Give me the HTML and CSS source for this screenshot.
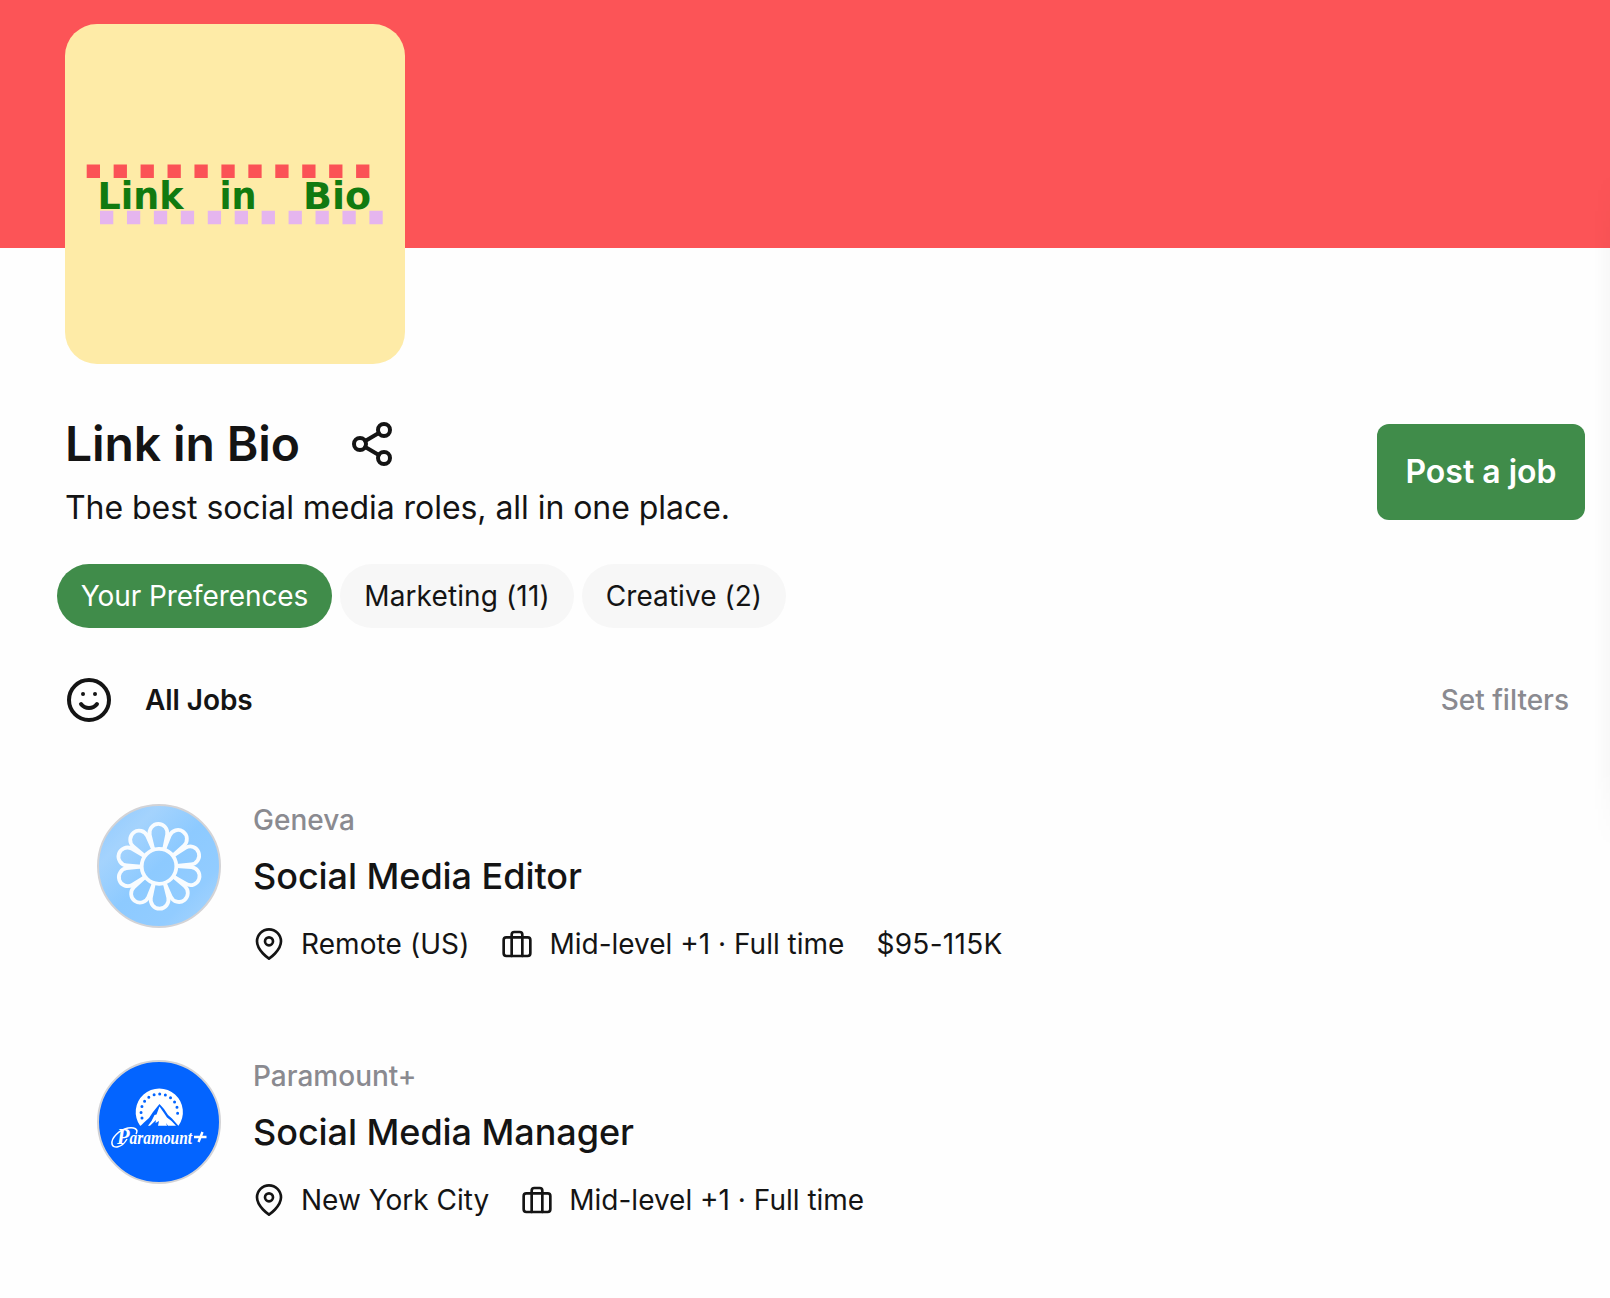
FILE: index.html
```html
<!DOCTYPE html>
<html lang="en">
<head>
<meta charset="utf-8">
<title>Link in Bio</title>
<link rel="stylesheet" href="styles.css">
</head>
<body>
<svg class="sprite" width="0" height="0">
  <symbol id="pin" viewBox="0 0 24 24"><path d="M21 10c0 7-9 13-9 13s-9-6-9-13a9 9 0 0 1 18 0z"/><circle cx="12" cy="10" r="3"/></symbol>
  <symbol id="case" viewBox="0 0 24 24"><rect x="2" y="7" width="20" height="14" rx="2"/><path d="M16 21V5a2 2 0 0 0-2-2h-4a2 2 0 0 0-2 2v16"/></symbol>
</svg>
<header class="banner">
  <div class="logo">
    <svg width="340" height="340" viewBox="0 0 340 340">
      <path class="dots-top" d="M21.7 147.300H310"/>
      <path class="dots-bottom" d="M35 193.500H319"/>
      <g class="wordmark">
        <text x="32.500" y="184.500" textLength="86" lengthAdjust="spacingAndGlyphs">Link</text>
        <text x="154.500" y="184.500" textLength="37" lengthAdjust="spacingAndGlyphs">in</text>
        <text x="238" y="184.500" textLength="68" lengthAdjust="spacingAndGlyphs">Bio</text>
      </g>
    </svg>
  </div>
</header>
<main class="page">
  <section class="intro">
    <div>
      <div class="title-row">
        <h1>Link in Bio</h1>
        <svg class="icon icon-lg" viewBox="0 0 24 24"><circle cx="18" cy="5" r="3"/><circle cx="6" cy="12" r="3"/><circle cx="18" cy="19" r="3"/><path d="M8.590 13.510l6.830 3.980M15.410 6.510l-6.820 3.980"/></svg>
      </div>
      <p class="tagline">The best social media roles, all in one place.</p>
    </div>
    <button class="post">Post a job</button>
  </section>
  <nav class="pills">
    <a class="pill pill-active">Your Preferences</a>
    <a class="pill pill-marketing">Marketing (11)</a>
    <a class="pill pill-creative">Creative (2)</a>
  </nav>
  <div class="list-head">
    <svg class="icon icon-lg" viewBox="0 0 24 24"><circle cx="12" cy="12" r="10"/><path d="M8 14s1.500 2 4 2 4-2 4-2M9 9h.01M15 9h.01"/></svg>
    <h2>All Jobs</h2>
    <a class="filters">Set filters</a>
  </div>
  <section class="jobs">
    <article class="job">
      <svg class="avatar" viewBox="0 0 124 124">
        <defs>
          <linearGradient id="sky" x1="0" y1="0" x2="1" y2="1"><stop offset="0" stop-color="#8fc9ff"/><stop offset=".25" stop-color="#a4d3fd"/><stop offset=".5" stop-color="#8dcaff"/><stop offset=".75" stop-color="#92ccff"/><stop offset="1" stop-color="#acd6fc"/></linearGradient>
          <path id="petal" d="M-5.500-17L-8.800-31.500A9 9 0 1 1 8.800-31.500L5.500-17"/>
        </defs>
        <circle cx="62" cy="62" r="61" fill="url(#sky)" stroke="#d3d3d6" stroke-width="2"/>
        <g class="flower" transform="translate(62 62.300) rotate(-1) scale(.99 1)">
          <circle r="17.500"/>
          <use href="#petal"/><use href="#petal" transform="rotate(36)"/><use href="#petal" transform="rotate(72)"/><use href="#petal" transform="rotate(108)"/><use href="#petal" transform="rotate(144)"/><use href="#petal" transform="rotate(180)"/><use href="#petal" transform="rotate(216)"/><use href="#petal" transform="rotate(252)"/><use href="#petal" transform="rotate(288)"/><use href="#petal" transform="rotate(324)"/>
        </g>
      </svg>
      <div class="details">
        <div class="company">Geneva</div>
        <h3>Social Media Editor</h3>
        <div class="meta">
          <span class="fact"><svg class="icon"><use href="#pin"/></svg><span class="place">Remote (US)</span></span>
          <span class="fact"><svg class="icon"><use href="#case"/></svg><span>Mid-level +1 · Full time</span></span>
          <span class="salary">$95-115K</span>
        </div>
      </div>
    </article>
    <article class="job">
      <svg class="avatar" viewBox="0 0 124 124">
        <circle cx="62" cy="62" r="61" fill="#0364ff" stroke="#d3d3d6" stroke-width="2"/>
        <path fill="#fff" d="M43.100 65.700A23.600 23.600 0 1 1 81.500 65.700z"/>
        <path class="stars" d="M45 58A18.300 18.300 0 1 1 79.700 58"/>
        <path fill="#0364ff" d="M43 66.500L47 62.500L52 58L56 52L62.500 44L67 49L71 55L75 58.500L82 66.500z"/>
        <path fill="#fff" d="M62.500 46.500L67 53L70 57.500L74.500 61L79 65.800H71L69 63L70 65.800H61L62 61L58.500 63L59 60L53 65.800H51L54.500 61L57.500 55L59.500 54.500z"/>
        <text class="script" x="20" y="83.800" textLength="75" lengthAdjust="spacingAndGlyphs"><tspan class="script-cap">P</tspan>aramount</text>
        <path class="plus" d="M105.500 72L101.500 82M97 77H109.500"/>
        <path class="swash" d="M30 79C25 88 16 89 15 84C14 78 22 70 31 68C37 67 42 69 39 74"/>
      </svg>
      <div class="details">
        <div class="company">Paramount+</div>
        <h3>Social Media Manager</h3>
        <div class="meta">
          <span class="fact"><svg class="icon"><use href="#pin"/></svg><span>New York City</span></span>
          <span class="fact"><svg class="icon"><use href="#case"/></svg><span>Mid-level +1 · Full time</span></span>
        </div>
      </div>
    </article>
  </section>
</main>
<div class="edge-shadow"></div>
</body>
</html>
```
FILE: styles.css
```css
* { box-sizing: border-box; }
body {
  margin: 0;
  width: 1610px;
  height: 1298px;
  overflow: hidden;
  position: relative;
  background: #fefefe;
  color: #141414;
  font-family: Inter, "Liberation Sans", sans-serif;
  font-size: 28px;
  line-height: 32px;
  white-space: nowrap;
}
h1, h2, h3, p { margin: 0; }
.sprite { position: absolute; }
.banner { height: 248px; padding: 24px 0 0 65px; background: #fc5457; }
.logo { width: 340px; height: 340px; border-radius: 32px; background: #feeba7; overflow: hidden; }
.logo svg { display: block; }
.dots-top, .dots-bottom { fill: none; stroke-width: 13.500px; stroke-dasharray: 13.300px 13.640px; }
.dots-top { stroke: #fb5256; }
.dots-bottom { stroke: #e5b5ee; }
.wordmark { font: bold 37px "DejaVu Sans", sans-serif; fill: #117a10; }
.page { padding: 172px 25px 0 65px; }
.intro { display: flex; justify-content: space-between; align-items: flex-start; }
.title-row { display: flex; align-items: center; height: 48px; }
.title-row .icon { margin-left: 49px; }
h1 { font-size: 48px; line-height: 48px; font-weight: 600; width: 234px; letter-spacing: -.1px; }
.tagline { margin-top: 16px; font-size: 32px; line-height: 48px; letter-spacing: -.05px; }
.post { margin-top: 4px; width: 208px; height: 96px; border: 0; border-radius: 12px; background: #408c4a; color: #fff; font: 600 32px Inter, sans-serif; padding: 0 0 2px; }
.pills { display: flex; gap: 8px; margin: 32px 0 0 -8px; }
.pill { height: 64px; line-height: 64px; border-radius: 32px; background: #f7f7f7; text-align: center; width: 275px; }
.pill-active { background: #408c4a; color: #fff; letter-spacing: -.07px; }
.pill-marketing { width: 234px; letter-spacing: .12px; }
.pill-creative { width: 204px; letter-spacing: .05px; }
.list-head { display: flex; align-items: center; height: 48px; margin-top: 48px; padding-right: 16px; }
h2 { margin-left: 32px; font-size: 28px; font-weight: 600; letter-spacing: -.07px; }
.filters { margin-left: auto; color: #8a8a90; font-weight: 500; }
.icon { width: 32px; height: 32px; flex: none; fill: none; stroke: #141414; stroke-width: 2px; stroke-linecap: round; stroke-linejoin: round; }
.icon-lg { width: 48px; height: 48px; }
.jobs { display: flex; flex-direction: column; gap: 100px; padding: 80px 0 0 32px; }
.job { display: flex; gap: 32px; height: 156px; }
.avatar { width: 124px; height: 124px; }
.company { color: #8a8a90; font-weight: 500; }
h3 { margin-top: 16px; font-size: 36px; line-height: 48px; font-weight: 500; letter-spacing: -.06px; }
.meta { display: flex; gap: 32px; margin-top: 28px; }
.fact { display: flex; gap: 16px; }
.place { letter-spacing: .08px; }
.salary { letter-spacing: .3px; }
.flower { fill: none; stroke: #f8fcff; stroke-width: 3.800px; stroke-linejoin: round; }
.stars { fill: none; stroke: #0364ff; stroke-width: 3px; stroke-linecap: round; stroke-dasharray: 0 5.800px; }
.script { font: italic bold 18px "Liberation Serif", serif; fill: #fff; }
.script-cap { font-size: 24px; }
.plus { fill: none; stroke: #fff; stroke-width: 2.400px; }
.swash { fill: none; stroke: #fff; stroke-width: 1.500px; }
.edge-shadow { position: absolute; right: 0; top: 170px; width: 16px; height: 680px; background: linear-gradient(to right, transparent, rgba(0, 0, 0, .025)); -webkit-mask-image: linear-gradient(transparent, #000 12%, #000 88%, transparent); mask-image: linear-gradient(transparent, #000 12%, #000 88%, transparent); }
```
